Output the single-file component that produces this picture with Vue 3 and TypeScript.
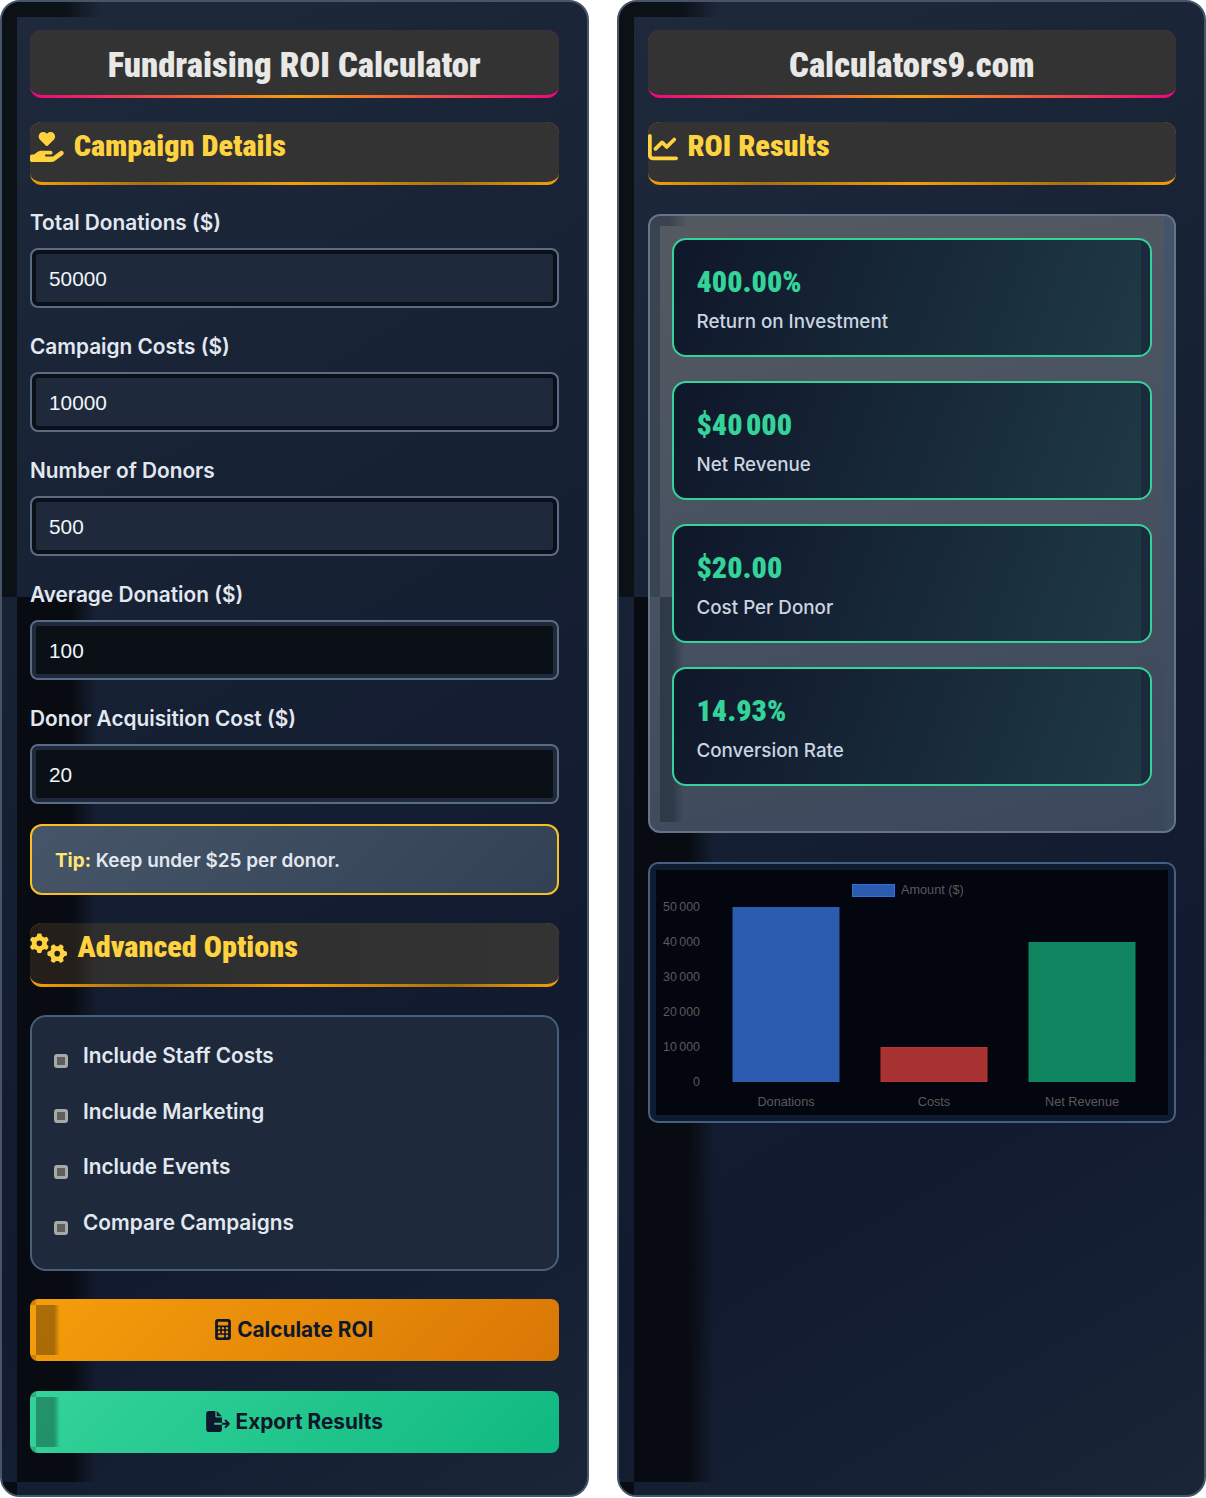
<script setup lang="ts">
const fields = [
  { label: 'Total Donations ($)', value: '50000', dark: false },
  { label: 'Campaign Costs ($)', value: '10000', dark: false },
  { label: 'Number of Donors', value: '500', dark: false },
  { label: 'Average Donation ($)', value: '100', dark: true },
  { label: 'Donor Acquisition Cost ($)', value: '20', dark: true },
]
const options = ['Include Staff Costs', 'Include Marketing', 'Include Events', 'Compare Campaigns']
const results = [
  { value: '400.00%', label: 'Return on Investment' },
  { value: '$40\u202f000', label: 'Net Revenue' },
  { value: '$20.00', label: 'Cost Per Donor' },
  { value: '14.93%', label: 'Conversion Rate' },
]
const ticks = [
  { label: '50\u202f000', y: 41 },
  { label: '40\u202f000', y: 76 },
  { label: '30\u202f000', y: 111 },
  { label: '20\u202f000', y: 146 },
  { label: '10\u202f000', y: 181 },
  { label: '0', y: 216 },
]
const bars = [
  { label: 'Donations', x: 77, y: 37.5, h: 174, fill: '#2b5cb0', stroke: '#2a5aa8' },
  { label: 'Costs', x: 225, y: 177.5, h: 34, fill: '#a83232', stroke: '#b83535' },
  { label: 'Net Revenue', x: 373, y: 72.5, h: 139, fill: '#0e855f', stroke: '#0f8a62' },
]
</script>

<template>
  <div class="page">
    <section class="panel">
      <i class="shade shade-top"></i><i class="shade shade-left"></i><i class="shade shade-low"></i><i class="shade shade-corner"></i>
      <h1 class="title">Fundraising ROI Calculator</h1>
      <h2 class="section">
        <svg class="ico" viewBox="0 0 576 512" width="33.75" height="30"><path d="M148 76.6C148 34.3 182.3 0 224.6 0c20.3 0 39.8 8.1 54.1 22.4l9.3 9.3 9.3-9.3C311.6 8.1 331.1 0 351.4 0C393.7 0 428 34.3 428 76.6c0 20.3-8.1 39.8-22.4 54.1L302.1 234.1c-7.8 7.8-20.5 7.8-28.3 0L170.4 130.7C156.1 116.4 148 96.9 148 76.6zM568.2 336.3c13.1 17.8 9.3 42.8-8.5 55.9L433.1 485.5c-23.4 17.2-51.6 26.5-80.7 26.5H192 32c-17.7 0-32-14.3-32-32V416c0-17.7 14.3-32 32-32H68.8l44.9-36c22.7-18.2 50.9-28 80-28H272h16 64c17.7 0 32 14.3 32 32s-14.3 32-32 32H288 272c-8.8 0-16 7.2-16 16s7.2 16 16 16H392.6l119.7-88.2c17.8-13.1 42.8-9.3 55.9 8.5z"/></svg>
        <span>Campaign Details</span>
      </h2>
      <div v-for="f in fields" :key="f.label" class="field">
        <label class="label">{{ f.label }}</label>
        <input class="input" :class="{ dark: f.dark }" type="text" :value="f.value" />
      </div>
      <div class="tip"><b>Tip:</b> Keep under $25 per donor.</div>
      <h2 class="section adv">
        <svg class="ico" viewBox="0 0 640 512" width="37.5" height="30"><path d="M308.5 135.3c7.1-6.3 9.9-16.2 6.2-25c-2.3-5.3-4.8-10.5-7.6-15.5L304 89.4c-3-5-6.3-9.9-9.8-14.6c-5.7-7.6-15.7-10.1-24.7-7.1l-28.2 9.3c-10.7-8.8-23-16-36.2-20.9L199 27.1c-1.9-9.3-9.1-16.7-18.5-17.8C173.9 8.4 167.2 8 160.4 8h-.7c-6.8 0-13.5 .4-20.1 1.2c-9.4 1.1-16.6 8.6-18.5 17.8L115 56.1c-13.3 5-25.5 12.1-36.2 20.9L50.5 67.8c-9-3-19-.5-24.7 7.1c-3.5 4.7-6.8 9.6-9.9 14.6l-3 5.3c-2.8 5-5.3 10.2-7.6 15.6c-3.7 8.7-.9 18.6 6.2 25l22.2 19.8C32.6 161.9 32 168.9 32 176s.6 14.1 1.7 20.9L11.5 216.7c-7.1 6.3-9.9 16.2-6.2 25c2.3 5.3 4.8 10.5 7.6 15.6l3 5.2c3 5.1 6.3 9.9 9.9 14.6c5.7 7.6 15.7 10.1 24.7 7.1l28.2-9.3c10.7 8.8 23 16 36.2 20.9l6.1 29.1c1.9 9.3 9.1 16.7 18.5 17.8c6.7 .8 13.5 1.2 20.4 1.2s13.7-.4 20.4-1.2c9.4-1.1 16.6-8.6 18.5-17.8l6.1-29.1c13.3-5 25.5-12.1 36.2-20.9l28.2 9.3c9 3 19 .5 24.7-7.1c3.5-4.7 6.8-9.5 9.8-14.6l3.1-5.4c2.8-5 5.3-10.2 7.6-15.5c3.7-8.7 .9-18.6-6.2-25l-22.2-19.8c1.1-6.8 1.7-13.8 1.7-20.9s-.6-14.1-1.7-20.9l22.2-19.8zM112 176a48 48 0 1 1 96 0 48 48 0 1 1 -96 0zM504.7 500.5c6.3 7.1 16.2 9.9 25 6.2c5.3-2.3 10.5-4.8 15.5-7.6l5.4-3.1c5-3 9.9-6.3 14.6-9.8c7.6-5.7 10.1-15.7 7.1-24.7l-9.3-28.2c8.8-10.7 16-23 20.9-36.2l29.1-6.1c9.3-1.9 16.7-9.1 17.8-18.5c.8-6.7 1.2-13.5 1.2-20.4s-.4-13.7-1.2-20.4c-1.1-9.4-8.6-16.6-17.8-18.5L583.9 307c-5-13.3-12.1-25.5-20.9-36.2l9.3-28.2c3-9 .5-19-7.1-24.7c-4.7-3.5-9.6-6.8-14.6-9.9l-5.3-3c-5-2.8-10.2-5.3-15.6-7.6c-8.7-3.7-18.6-.9-25 6.2l-19.8 22.2c-6.8-1.1-13.8-1.7-20.9-1.7s-14.1 .6-20.9 1.7l-19.8-22.2c-6.3-7.1-16.2-9.9-25-6.2c-5.3 2.3-10.5 4.8-15.6 7.6l-5.2 3c-5.1 3-9.9 6.3-14.6 9.9c-7.6 5.7-10.1 15.7-7.1 24.7l9.3 28.2c-8.8 10.7-16 23-20.9 36.2L315.1 313c-9.3 1.9-16.7 9.1-17.8 18.5c-.8 6.7-1.2 13.5-1.2 20.4s.4 13.7 1.2 20.4c1.1 9.4 8.6 16.6 17.8 18.5l29.1 6.1c5 13.3 12.1 25.5 20.9 36.2l-9.3 28.2c-3 9-.5 19 7.1 24.7c4.7 3.5 9.5 6.8 14.6 9.8l5.4 3.1c5 2.8 10.2 5.3 15.5 7.6c8.7 3.7 18.6 .9 25-6.2l19.8-22.2c6.8 1.1 13.8 1.7 20.9 1.7s14.1-.6 20.9-1.7l19.8 22.2zM464 304a48 48 0 1 1 0 96 48 48 0 1 1 0-96z"/></svg>
        <span>Advanced Options</span>
      </h2>
      <div class="options">
        <div v-for="o in options" :key="o" class="option"><span class="check"></span><span>{{ o }}</span></div>
      </div>
      <button class="btn amber" type="button">
        <svg viewBox="0 0 384 512" width="16" height="21"><path d="M64 0C28.7 0 0 28.7 0 64V448c0 35.3 28.7 64 64 64H320c35.3 0 64-28.7 64-64V64c0-35.3-28.7-64-64-64H64zM96 64H288c17.7 0 32 14.3 32 32v32c0 17.7-14.3 32-32 32H96c-17.7 0-32-14.3-32-32V96c0-17.7 14.3-32 32-32zm32 160a32 32 0 1 1 -64 0 32 32 0 1 1 64 0zM96 352a32 32 0 1 1 0-64 32 32 0 1 1 0 64zM64 416c0-17.7 14.3-32 32-32h96c17.7 0 32 14.3 32 32s-14.3 32-32 32H96c-17.7 0-32-14.3-32-32zM192 256a32 32 0 1 1 0-64 32 32 0 1 1 0 64zm32 64a32 32 0 1 1 -64 0 32 32 0 1 1 64 0zm64-64a32 32 0 1 1 0-64 32 32 0 1 1 0 64zm32 64a32 32 0 1 1 -64 0 32 32 0 1 1 64 0zM288 448a32 32 0 1 1 0-64 32 32 0 1 1 0 64z"/></svg>
        <span>Calculate ROI</span>
      </button>
      <button class="btn green" type="button">
        <svg viewBox="0 0 576 512" width="24" height="21"><path d="M0 64C0 28.7 28.7 0 64 0H224V128c0 17.7 14.3 32 32 32H384V288H216c-13.3 0-24 10.7-24 24s10.7 24 24 24H384V448c0 35.3-28.7 64-64 64H64c-35.3 0-64-28.7-64-64V64zM384 336V288H494.1l-39-39c-9.4-9.4-9.4-24.6 0-33.9s24.6-9.4 33.9 0l80 80c9.4 9.4 9.4 24.6 0 33.9l-80 80c-9.4 9.4-24.6 9.4-33.9 0s-9.4-24.6 0-33.9l39-39H384zm0-208H256V0L384 128z"/></svg>
        <span>Export Results</span>
      </button>
    </section>

    <section class="panel second">
      <i class="shade shade-top"></i><i class="shade shade-left"></i><i class="shade shade-low"></i><i class="shade shade-corner"></i>
      <h1 class="title">Calculators9.com</h1>
      <h2 class="section">
        <svg class="ico" viewBox="0 0 512 512" width="30" height="30"><path d="M64 64c0-17.7-14.3-32-32-32S0 46.3 0 64V400c0 44.2 35.8 80 80 80H480c17.7 0 32-14.3 32-32s-14.3-32-32-32H80c-8.8 0-16-7.2-16-16V64zm406.6 86.6c12.5-12.5 12.5-32.8 0-45.3s-32.8-12.5-45.3 0L320 210.7l-57.4-57.4c-12.5-12.5-32.8-12.5-45.3 0l-112 112c-12.5 12.5-12.5 32.8 0 45.3s32.8 12.5 45.3 0L240 221.3l57.4 57.4c12.5 12.5 32.8 12.5 45.3 0l128-128z"/></svg>
        <span>ROI Results</span>
      </h2>
      <div class="results">
        <i class="rshade rshade-top"></i><i class="rshade rshade-left"></i><i class="rshade rshade-low"></i><i class="rshade rshade-right"></i>
        <div v-for="r in results" :key="r.label" class="card">
          <div class="value">{{ r.value }}</div>
          <div class="card-label">{{ r.label }}</div>
        </div>
      </div>
      <div class="chart">
        <svg viewBox="0 0 512 245" width="512" height="245" class="chart-svg">
          <rect x="196.5" y="14.5" width="42" height="12" fill="#2b5cb0" stroke="#2f6fe0" />
          <text x="245" y="24" class="tick">Amount ($)</text>
          <text v-for="t in ticks" :key="t.label" x="44" :y="t.y" text-anchor="end" class="tick num">{{ t.label }}</text>
          <g v-for="b in bars" :key="b.label">
            <rect :x="b.x" :y="b.y" width="106" :height="b.h" :fill="b.fill" :stroke="b.stroke" />
            <text :x="b.x + 53" y="236" text-anchor="middle" class="tick">{{ b.label }}</text>
          </g>
        </svg>
      </div>
    </section>
  </div>
</template>

<style>
html, body { margin: 0; background: #fff; }
</style>

<style scoped>
.page {
  width: 1206px;
  height: 1497px;
  display: flex;
  gap: 28px;
  font-family: Inter, "Liberation Sans", sans-serif;
}
.panel {
  position: relative;
  flex: 1 1 0;
  min-width: 0;
  box-sizing: border-box;
  padding: 28px;
  border: 2px solid #475569;
  border-radius: 20px;
  overflow: hidden;
  background: linear-gradient(150deg, #1e293b 0%, #111a2e 72%, #1a2538 100%);
  display: flex;
  flex-direction: column;
}
.second { padding-left: 29px; }
.panel > * { position: relative; flex-shrink: 0; }
.panel > .shade { position: absolute; pointer-events: none; }
.shade-top {
  left: 0; top: 0; width: 100px; height: 15px;
  background: linear-gradient(90deg, #0c1118 0, #0c1118 62%, rgba(12, 17, 24, 0) 100%);
}
.shade-left {
  left: 0; top: 15px; width: 15px; height: 580px;
  background: #0c1118;
}
.shade-low {
  left: 15px; top: 595px; width: 80px; height: 885px;
  background: linear-gradient(90deg, #080b12 0, #080b12 68%, rgba(8, 11, 18, 0) 100%);
}
.shade-corner {
  left: 0; top: 1480px; width: 15px; height: 17px;
  background: #080b12;
}
.title, .section {
  margin: 0;
  box-sizing: border-box;
  font-family: "Roboto Condensed", Roboto, sans-serif;
  font-stretch: 75%;
  font-weight: 900;
  border-radius: 12px;
  border-bottom: 3px solid transparent;
}
.title {
  height: 68px;
  padding-top: 13px;
  margin-bottom: 24px;
  text-align: center;
  font-size: 34.7px;
  line-height: 44px;
  color: #e8e8e6;
  background:
    linear-gradient(#333, #333) padding-box,
    linear-gradient(90deg, #f0047f, #f59e0b 50%, #f0047f) border-box;
}
.section {
  height: 63px;
  display: flex;
  align-items: flex-start;
  gap: 10px;
  padding-top: 4px;
  margin-bottom: 24px;
  font-size: 30.2px;
  line-height: 40px;
  color: #ffd23f;
  background:
    linear-gradient(#333, #333) padding-box,
    linear-gradient(90deg, #f59e0b, #a8700f 22%, #f59e0b 50%, #a8700f 80%, #f59e0b) border-box;
}
.ico { fill: #ffd23f; flex: none; margin-top: 6px; }
.adv {
  height: 63.5px;
  margin-top: 28px;
  margin-bottom: 28.5px;
  background:
    linear-gradient(90deg, #241f1a 0, #241f1a 45px, #2e2e2e 65px, #333 100%) padding-box,
    linear-gradient(90deg, #f59e0b, #a8700f 22%, #f59e0b 50%, #a8700f 80%, #f59e0b) border-box;
}
.field { margin-bottom: 25px; }
.label {
  display: block;
  height: 27px;
  margin-bottom: 12px;
  font-size: 20.8px;
  line-height: 27px;
  font-weight: 600;
  color: #e2e8f0;
}
.input {
  display: block;
  width: 100%;
  height: 60px;
  box-sizing: border-box;
  padding: 1px 17px 0;
  border: 2px solid #5a6b84;
  border-radius: 8px;
  outline: none;
  background: #1e293b;
  box-shadow: inset 0 0 0 4px #0b1018;
  font-family: "Liberation Sans", sans-serif;
  font-size: 20.8px;
  color: #f1f5f9;
}
.input.dark {
  background: #0b1017;
  box-shadow: inset 0 0 0 4px #1e293b;
}
.tip {
  box-sizing: border-box;
  height: 71px;
  margin-top: -5px;
  padding: 23px;
  border: 2px solid #fbbf24;
  border-radius: 12px;
  background: linear-gradient(135deg, #475569, #334155);
  font-size: 18.9px;
  line-height: 24px;
  font-weight: 600;
  color: #e2e8f0;
}
.tip b { color: #fde873; font-weight: 700; }
.options {
  box-sizing: border-box;
  height: 256px;
  margin-bottom: 28px;
  padding: 11px 22px;
  border: 2px solid #475f7c;
  border-radius: 16px;
  background: #1e293b;
  display: flex;
  flex-direction: column;
}
.option {
  height: 55.6px;
  flex: none;
  display: flex;
  align-items: center;
  gap: 15px;
  font-size: 20.8px;
  font-weight: 600;
  color: #e2e8f0;
}
.check {
  flex: none;
  width: 14px;
  height: 14px;
  margin-top: 10px;
  box-sizing: border-box;
  border: 3px solid #a8a8a8;
  border-radius: 3px;
  background: #5f5f5f;
}
.btn {
  position: relative;
  height: 61.5px;
  margin-bottom: 30.5px;
  width: 100%;
  padding: 0;
  border: 0;
  border-radius: 8px;
  overflow: hidden;
  display: flex;
  align-items: center;
  justify-content: center;
  gap: 6px;
  font-family: Inter, sans-serif;
  font-size: 20.8px;
  font-weight: 700;
  color: #0f172a;
}
.btn svg { fill: #0f172a; }
.btn::before {
  content: "";
  position: absolute;
  left: 6px;
  top: 6px;
  bottom: 6px;
  width: 24px;
  background: linear-gradient(90deg, rgba(0, 0, 0, .3) 0, rgba(0, 0, 0, .3) 75%, rgba(0, 0, 0, 0) 100%);
}
.btn::after {
  content: "";
  position: absolute;
  left: 0;
  top: 0;
  bottom: 0;
  width: 6px;
  background: linear-gradient(rgba(0, 0, 0, .16) 6px, rgba(0, 0, 0, 0) 6px, rgba(0, 0, 0, 0) calc(100% - 6px), rgba(0, 0, 0, .16) calc(100% - 6px));
}
.amber { background: linear-gradient(135deg, #f59e0b, #d97706); }
.green { background: linear-gradient(135deg, #34d399, #10b981); }
.results {
  position: relative;
  box-sizing: border-box;
  height: 618.5px;
  margin-top: 5px;
  margin-bottom: 29px;
  padding: 22px;
  border: 2px solid #64748b;
  border-radius: 12px;
  overflow: hidden;
  background: linear-gradient(165deg, #555a60 0%, #4a5361 40%, #3b485c 100%);
  display: flex;
  flex-direction: column;
  gap: 24px;
}
.rshade { position: absolute; pointer-events: none; }
.rshade-top { left: 0; top: 0; width: 38px; height: 10px; background: linear-gradient(90deg, #3a424f 0, #3a424f 50%, rgba(58, 66, 79, 0)); }
.rshade-left { left: 0; top: 10px; width: 10px; height: 371px; background: #3a4350; }
.rshade-low { left: 10px; top: 381px; width: 24px; height: 225px; background: linear-gradient(90deg, #2f3a49 0, #2f3a49 50%, rgba(47, 58, 73, 0)); }
.rshade-right { right: 0; top: 0; width: 10px; height: 100%; background: linear-gradient(#44546a, #3d4b60); }
.card {
  position: relative;
  box-sizing: border-box;
  height: 119px;
  flex: none;
  padding: 21.5px 23px;
  border: 2px solid #34d399;
  border-radius: 14px;
  overflow: hidden;
  background: linear-gradient(110deg, #0f172a 0%, #1f3a46 100%);
}
.card::after {
  content: "";
  position: absolute;
  right: 0;
  top: 0;
  bottom: 0;
  width: 9px;
  background: #1c2a3d;
}
.value {
  font-family: "Roboto Condensed", Roboto, sans-serif;
  font-stretch: 75%;
  font-weight: 900;
  font-size: 30px;
  line-height: 40px;
  color: #34d399;
}
.card-label {
  margin-top: 7.5px;
  font-size: 18.8px;
  line-height: 26px;
  font-weight: 500;
  color: #cbd5e1;
}
.chart {
  box-sizing: border-box;
  height: 261.5px;
  padding: 6px;
  border: 2px solid #475f7c;
  border-radius: 10px;
  background: #0f1b30;
}
.chart-svg { display: block; background: #03060e; }
.tick {
  font-family: "Liberation Sans", sans-serif;
  font-size: 12.7px;
  fill: #5a5a5a;
}
.tick.num { font-size: 12.4px; }
</style>
